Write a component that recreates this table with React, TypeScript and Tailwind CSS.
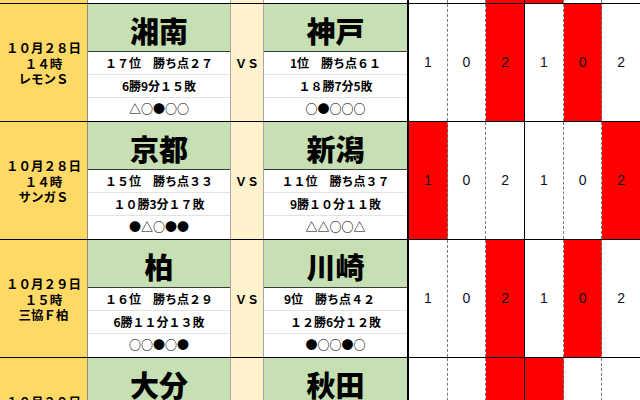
type Team = { name: string; lines: string[] };
type Match = {
  date: string[];
  home: Team;
  away: Team;
  scores: string[];
  red: number[];
};

const matches: Match[] = [
  {
    date: ["１０月２８日", "１４時", "レモンＳ"],
    home: { name: "湘南", lines: ["１７位　勝ち点２７", "6勝9分１５敗", "△○●○○"] },
    away: { name: "神戸", lines: ["1位　勝ち点６１", "１８勝7分5敗", "○●○○○"] },
    scores: ["1", "0", "2", "1", "0", "2"],
    red: [2, 4],
  },
  {
    date: ["１０月２８日", "１４時", "サンガＳ"],
    home: { name: "京都", lines: ["１５位　勝ち点３３", "１０勝3分１７敗", "●△○●●"] },
    away: { name: "新潟", lines: ["１１位　勝ち点３７", "9勝１０分１１敗", "△△○○△"] },
    scores: ["1", "0", "2", "1", "0", "2"],
    red: [0, 5],
  },
  {
    date: ["１０月２９日", "１５時", "三協Ｆ柏"],
    home: { name: "柏", lines: ["１６位　勝ち点２９", "6勝１１分１３敗", "○○●○●"] },
    away: { name: "川崎", lines: ["9位　勝ち点４２　", "１２勝6分１２敗", "●○○●○"] },
    scores: ["1", "0", "2", "1", "0", "2"],
    red: [2, 4],
  },
  {
    date: ["１０月２９日", "１５時", "昭和電ド"],
    home: { name: "大分", lines: ["", "", ""] },
    away: { name: "秋田", lines: ["", "", ""] },
    scores: ["1", "0", "2", "1", "0", "2"],
    red: [2, 3],
  },
];

// border style for each score column (right edge)
const colBorder = [
  "border-r border-dashed border-r-[#7a7a7a]",
  "border-r border-dashed border-r-[#7a7a7a]",
  "border-r border-r-black",
  "border-r border-dashed border-r-[#7a7a7a]",
  "border-r border-dashed border-r-[#7a7a7a]",
  "",
];

function TeamCell({ team, className }: { team: Team; className: string }) {
  return (
    <div className={`flex shrink-0 flex-col ${className}`}>
      <div className="flex h-[48px] items-center justify-center border-b border-b-[#3a3a3a] bg-[#c6e0b4] pt-[5px] text-[29px] font-black leading-none text-black">
        {team.name}
      </div>
      {team.lines.map((l, i) => (
        <div
          key={i}
          className={`flex h-[22px] items-center justify-center whitespace-pre bg-white text-[12px] font-bold leading-none text-black ${
            i > 0 ? "box-content border-t border-t-[#e2e2e2]" : ""
          }`}
        >
          {l}
        </div>
      ))}
    </div>
  );
}

function Block({ m }: { m: Match }) {
  return (
    <div className="flex h-[118px] border-t border-t-black">
      <div className="flex w-[88px] shrink-0 flex-col items-center justify-center border-r border-r-[#8c8c7a] bg-[#ffd966] pt-[2px] text-[12.5px] font-bold text-black">
        {m.date.map((l) => (
          <div key={l} className="h-[15.5px] leading-[15.5px]">
            {l}
          </div>
        ))}
      </div>
      <TeamCell team={m.home} className="w-[143px] border-r border-r-[#a6a6a6]" />
      <div className="flex w-[33px] shrink-0 items-center justify-center border-r border-r-[#a6a6a6] bg-[#fff2cc] text-[12px] font-bold text-black">
        ＶＳ
      </div>
      <TeamCell team={m.away} className="w-[145px] border-r-2 border-r-black" />
      {m.scores.map((s, i) => (
        <div
          key={i}
          className={`flex flex-1 items-center justify-center text-[14px] text-[#111122] [font-family:"Liberation_Sans",sans-serif] ${colBorder[i]} ${
            m.red.includes(i) ? "bg-[#ff0000]" : "bg-white"
          }`}
        >
          {s}
        </div>
      ))}
    </div>
  );
}

export default function App() {
  const topRed = [2, 3];
  return (
    <div className='h-[400px] w-[640px] overflow-hidden bg-white [font-family:"Noto_Sans_CJK_JP",sans-serif]'>
      <div className="flex h-[3px]">
        <div className="w-[88px] shrink-0 border-r border-r-[#8c8c7a] bg-[#ffd966]" />
        <div className="w-[143px] shrink-0 border-r border-r-[#a6a6a6] bg-white" />
        <div className="w-[33px] shrink-0 border-r border-r-[#a6a6a6] bg-[#fff2cc]" />
        <div className="w-[145px] shrink-0 border-r-2 border-r-black bg-white" />
        {colBorder.map((c, i) => (
          <div key={i} className={`flex-1 ${c} ${topRed.includes(i) ? "bg-[#ff0000]" : "bg-white"}`} />
        ))}
      </div>
      {matches.map((m) => (
        <Block key={m.home.name} m={m} />
      ))}
    </div>
  );
}
